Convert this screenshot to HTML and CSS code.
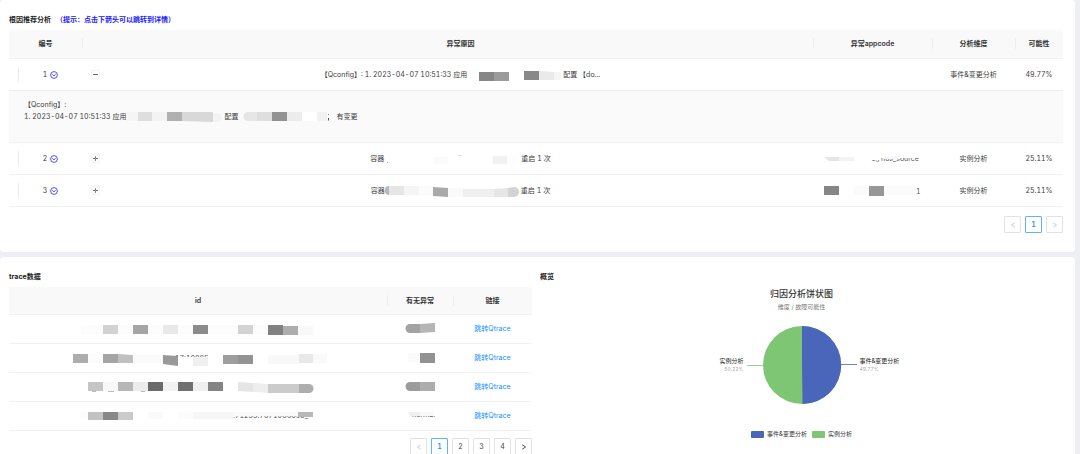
FILE: index.html
```html
<!DOCTYPE html>
<html lang="zh-CN">
<head>
    <meta charset="UTF-8">
    <meta name="viewport" content="width=device-width, initial-scale=1.0">
    <title>根因推荐分析</title>
    <link rel="stylesheet" href="styles.css">
</head>
<body>
    <svg class="sprite" aria-hidden="true">
        <symbol id="down" viewBox="0 0 16 16">
            <circle cx="8" cy="8" r="6.8" fill="none" stroke="currentColor" stroke-width="1.7"/>
            <path d="M4.6 6.6 L8 9.8 L11.4 6.6" fill="none" stroke="currentColor" stroke-width="1.7"/>
        </symbol>
        <symbol id="prev" viewBox="0 0 6 6"><path d="M4.8 .8 L1.4 3 L4.8 5.2" fill="none" stroke="currentColor" stroke-width=".9"/></symbol>
        <symbol id="next" viewBox="0 0 6 6"><path d="M1.2 .8 L4.6 3 L1.2 5.2" fill="none" stroke="currentColor" stroke-width=".9"/></symbol>
    </svg>

    <section class="card">
        <h2 class="title">根因推荐分析 <span class="tip">（提示：点击下箭头可以跳转到详情）</span></h2>
        <table class="table">
            <colgroup>
                <col class="col-no"><col class="col-expand"><col><col class="col-app"><col class="col-dim"><col class="col-rate">
            </colgroup>
            <thead>
                <tr>
                    <th>编号</th>
                    <th class="split"></th>
                    <th>异常原因</th>
                    <th class="split">异常appcode</th>
                    <th class="split">分析维度</th>
                    <th class="split">可能性</th>
                </tr>
            </thead>
            <tbody>
                <tr>
                    <td><div class="no">1 <a href="#d1" aria-label="详情 1"><svg class="down"><use href="#down"/></svg></a></div></td>
                    <td><button class="expand open" aria-label="收起"></button></td>
                    <td>
                        <div class="line">
                            <span>【Qconfig】: 1. 2023-04-07 10:51:33 应用</span>
                            <svg class="blur" width="96" height="16" viewBox="0 0 96 16">
                                <rect x="0" y="4" width="12" height="8" fill="#fdfdfd"/>
                                <rect x="12" y="5" width="15" height="9" fill="#868686"/>
                                <rect x="27" y="5" width="15" height="9" fill="#9b9b9b"/>
                                <rect x="57" y="4" width="15" height="9" fill="#888"/>
                                <path d="M72 4 L87 5 V13 L72 13z" fill="#eaeaea"/>
                                <path d="M87 5 H91 a4 4 0 0 1 0 8 H87z" fill="#f6f6f6"/>
                            </svg>
                            <span>配置 【do...</span>
                        </div>
                    </td>
                    <td></td>
                    <td>事件&amp;变更分析</td>
                    <td>49.77%</td>
                </tr>
                <tr class="detail" id="d1">
                    <td colspan="6">
                        <div class="line">【Qconfig】:</div>
                        <div class="line">
                            <span>1. 2023-04-07 10:51:33 应用</span>
                            <svg class="blur" width="98" height="12" viewBox="0 0 98 12">
                                <rect x="0" y="1" width="12" height="9" fill="#f5f5f5"/>
                                <rect x="12" y="1" width="14" height="9" fill="#dedede"/>
                                <rect x="26" y="1" width="15" height="9" fill="#f3f3f3"/>
                                <rect x="41" y="1" width="15" height="9" fill="#b0b0b0"/>
                                <path d="M56 1 H87 V11 L56 10z" fill="#d8d8d8"/>
                                <path d="M87 2 H91 a4 4 0 0 1 0 9 H87z" fill="#f3f3f3"/>
                            </svg>
                            <span>配置</span>
                            <svg class="blur" width="98" height="12" viewBox="0 0 98 12">
                                <path d="M20 1 H10 a4 4 0 0 0 0 9 H20z" fill="#e6e6e6"/>
                                <rect x="19" y="1" width="15" height="9" fill="#dedede"/>
                                <rect x="34" y="1" width="15" height="9" fill="#929292"/>
                                <rect x="49" y="1" width="15" height="9" fill="#ececec"/>
                                <rect x="64" y="1" width="15" height="9" fill="#fff"/>
                                <rect x="79" y="1" width="10" height="9" fill="#f2f2f2"/>
                                <rect x="90" y="3" width="1" height="1" fill="#888"/>
                                <path d="M90 7 h1 v2 l-1 1z" fill="#555"/>
                            </svg>
                            <span>有变更</span>
                        </div>
                    </td>
                </tr>
                <tr>
                    <td><div class="no">2 <a href="#d2" aria-label="详情 2"><svg class="down"><use href="#down"/></svg></a></div></td>
                    <td><button class="expand" aria-label="展开"></button></td>
                    <td>
                        <div class="line">
                            <span>容器</span>
                            <svg class="blur" width="137" height="16" viewBox="0 0 137 16">
                                <rect x="3" y="11" width="1" height="1" fill="#aaa"/>
                                <rect x="49" y="6" width="15" height="7" fill="#fbfbfb"/>
                                <rect x="74" y="4" width="3" height="1" fill="#ddd"/>
                                <rect x="109" y="5" width="14" height="8" fill="#f1f1f1"/>
                                <rect x="123" y="5" width="10" height="7" fill="#fdfdfd"/>
                            </svg>
                            <span>重启 1 次</span>
                        </div>
                    </td>
                    <td>
                        <svg class="blur" width="98" height="16" viewBox="0 0 98 16">
                            <text x="4" y="9">r_s</text>
                            <text x="24" y="9">_</text>
                            <text x="48" y="9">_g</text>
                            <text x="57" y="10">hos_source</text>
                            <rect x="0" y="0" width="56" height="9" fill="#fff"/>
                            <rect x="56" y="0" width="42" height="7" fill="#fff"/>
                            <path d="M0 6 H15 V10 H5z" fill="#e6e6e6"/>
                            <path d="M15 6 H30 V10 H15z" fill="#f3f3f3"/>
                            <path d="M60 5 H75 V8 H60z" fill="#f6f6f6"/>
                        </svg>
                    </td>
                    <td>实例分析</td>
                    <td>25.11%</td>
                </tr>
                <tr>
                    <td><div class="no">3 <a href="#d3" aria-label="详情 3"><svg class="down"><use href="#down"/></svg></a></div></td>
                    <td><button class="expand" aria-label="展开"></button></td>
                    <td>
                        <div class="line">
                            <span>容器</span>
                            <svg class="blur" width="136" height="16" viewBox="0 0 136 16">
                                <path d="M4 3 a4.500 4.500 0 0 0 0 9z" fill="#b8b8b8"/>
                                <rect x="4" y="3" width="15" height="9" fill="#e6e6e6"/>
                                <rect x="19" y="3" width="15" height="9" fill="#f5f5f5"/>
                                <rect x="34" y="3" width="15" height="9" fill="#fbfbfb"/>
                                <path d="M48 4 L63 5 V14 L48 13z" fill="#a9a9a9"/>
                                <rect x="63" y="5" width="15" height="9" fill="#fafafa"/>
                                <rect x="78" y="6" width="31" height="8" fill="#efefef"/>
                                <path d="M109 6 L123 5 V14 L109 14z" fill="#e6e6e6"/>
                                <path d="M123 5 L129 4 a5 5 0 0 1 0 10 H123z" fill="#d3d3d3"/>
                            </svg>
                            <span>重启 1 次</span>
                        </div>
                    </td>
                    <td>
                        <svg class="blur" width="98" height="16" viewBox="0 0 98 16">
                            <rect x="0" y="3" width="15" height="9" fill="#868686"/>
                            <rect x="30" y="3" width="15" height="9" fill="#fafafa"/>
                            <rect x="45" y="3" width="15" height="10" fill="#979797"/>
                            <rect x="60" y="3" width="31" height="9" fill="#fafafa"/>
                            <text x="92" y="11">1</text>
                        </svg>
                    </td>
                    <td>实例分析</td>
                    <td>25.11%</td>
                </tr>
            </tbody>
        </table>
        <nav class="pager" aria-label="根因分页">
            <button disabled aria-label="上一页"><svg><use href="#prev"/></svg></button>
            <button class="active">1</button>
            <button disabled aria-label="下一页"><svg><use href="#next"/></svg></button>
        </nav>
    </section>

    <section class="card bottom">
        <div class="trace">
            <h2 class="title">trace数据</h2>
            <table class="table trace-table">
                <colgroup>
                    <col><col class="col-flag"><col class="col-link">
                </colgroup>
                <thead>
                    <tr>
                        <th>id</th>
                        <th class="split">有无异常</th>
                        <th class="split">链接</th>
                    </tr>
                </thead>
                <tbody>
                    <tr>
                        <td>
                            <svg class="blur" width="258" height="18" viewBox="0 0 258 18">
                                <rect x="12" y="5" width="232" height="9" fill="#fcfcfc"/>
                                <rect x="34" y="5" width="15" height="9" fill="#d2d2d2"/>
                                <rect x="64" y="5" width="15" height="9" fill="#a5a5a5"/>
                                <rect x="94" y="5" width="15" height="9" fill="#e8e8e8"/>
                                <rect x="124" y="5" width="15" height="9" fill="#8b8b8b"/>
                                <rect x="169" y="5" width="15" height="9" fill="#d3d3d3"/>
                                <rect x="199" y="5" width="15" height="10" fill="#818181"/>
                                <rect x="214" y="6" width="15" height="9" fill="#adadad"/>
                                <rect x="229" y="6" width="15" height="9" fill="#f8f8f8"/>
                            </svg>
                        </td>
                        <td>
                            <svg class="blur" width="32" height="18" viewBox="0 0 32 18">
                                <path d="M16 4 H6 a4.500 4.500 0 0 0 0 9 H16z" fill="#a2a2a2"/>
                                <path d="M16 4 L31 3 V12 L16 13z" fill="#b5b5b5"/>
                            </svg>
                        </td>
                        <td><a class="link" href="#t1">跳转Qtrace</a></td>
                    </tr>
                    <tr>
                        <td>
                            <svg class="blur" width="258" height="18" viewBox="0 0 258 18">
                                <text x="106" y="12">17:10085</text>
                                <rect x="104" y="8" width="40" height="7" fill="#fff"/>
                                <rect x="4" y="5" width="15" height="9" fill="#adadad"/>
                                <rect x="19" y="5" width="15" height="9" fill="#fcfcfc"/>
                                <rect x="34" y="5" width="15" height="9" fill="#a5a5a5"/>
                                <path d="M49 5 L64 6 V14 H49z" fill="#c0c0c0"/>
                                <rect x="64" y="6" width="30" height="8" fill="#fafafa"/>
                                <path d="M94 6 L109 7 V17 L94 15z" fill="#999"/>
                                <rect x="124" y="8" width="15" height="9" fill="#f0f0f0"/>
                                <rect x="154" y="6" width="15" height="9" fill="#9e9e9e"/>
                                <rect x="169" y="6" width="15" height="9" fill="#939393"/>
                                <rect x="199" y="6" width="31" height="9" fill="#f8f8f8"/>
                                <rect x="230" y="5" width="14" height="9" fill="#e8e8e8"/>
                                <rect x="244" y="5" width="14" height="9" fill="#fafafa"/>
                            </svg>
                        </td>
                        <td>
                            <svg class="blur" width="32" height="18" viewBox="0 0 32 18">
                                <rect x="4" y="4" width="12" height="9" fill="#fbfbfb"/>
                                <rect x="16" y="4" width="15" height="10" fill="#929292"/>
                            </svg>
                        </td>
                        <td><a class="link" href="#t2">跳转Qtrace</a></td>
                    </tr>
                    <tr>
                        <td>
                            <svg class="blur" width="258" height="18" viewBox="0 0 258 18">
                                <rect x="23" y="13" width="4" height="1" fill="#bbb"/>
                                <rect x="39" y="13" width="6" height="1" fill="#bbb"/>
                                <rect x="72" y="13" width="4" height="1" fill="#bbb"/>
                                <rect x="19" y="4" width="15" height="9" fill="#c5c5c5"/>
                                <rect x="34" y="4" width="15" height="9" fill="#f8f8f8"/>
                                <rect x="49" y="4" width="15" height="9" fill="#b7b7b7"/>
                                <rect x="64" y="4" width="15" height="9" fill="#ececec"/>
                                <rect x="79" y="4" width="15" height="9" fill="#6a6a6a"/>
                                <rect x="94" y="4" width="15" height="9" fill="#f2f2f2"/>
                                <rect x="109" y="4" width="15" height="9" fill="#707070"/>
                                <rect x="124" y="4" width="15" height="9" fill="#f0f0f0"/>
                                <rect x="139" y="4" width="15" height="9" fill="#848484"/>
                                <path d="M169 4 L184 5 V14 L169 13z" fill="#e5e5e5"/>
                                <path d="M184 5 L199 6 V15 L184 14z" fill="#eee"/>
                                <rect x="199" y="6" width="31" height="9" fill="#cbcbcb"/>
                                <path d="M230 6 H240 a4.500 4.500 0 0 1 0 9 H230z" fill="#aeaeae"/>
                            </svg>
                        </td>
                        <td>
                            <svg class="blur" width="32" height="18" viewBox="0 0 32 18">
                                <path d="M16 4 H6 a4.500 4.500 0 0 0 0 9 H16z" fill="#9c9c9c"/>
                                <rect x="16" y="4" width="15" height="9" fill="#adadad"/>
                            </svg>
                        </td>
                        <td><a class="link" href="#t3">跳转Qtrace</a></td>
                    </tr>
                    <tr>
                        <td>
                            <svg class="blur" width="258" height="18" viewBox="0 0 258 18">
                                <text x="164" y="11">.71233.7871086893_</text>
                                <path d="M150 3 H244 V6 L200 9 H150z" fill="#fff"/>
                                <rect x="12" y="5" width="7" height="7" fill="#fcfcfc"/>
                                <rect x="19" y="5" width="15" height="8" fill="#c2c2c2"/>
                                <rect x="34" y="5" width="15" height="8" fill="#888"/>
                                <rect x="49" y="5" width="15" height="8" fill="#cacaca"/>
                                <rect x="79" y="5" width="15" height="7" fill="#fafafa"/>
                                <rect x="109" y="5" width="15" height="7" fill="#fcfcfc"/>
                                <rect x="124" y="5" width="40" height="7" fill="#f6f6f6"/>
                                <path d="M164 5 H230 V9 H164z" fill="#fafafa"/>
                                <rect x="229" y="5" width="15" height="5" fill="#b8b8b8"/>
                            </svg>
                        </td>
                        <td>
                            <svg class="blur" width="32" height="18" viewBox="0 0 32 18">
                                <text x="8" y="10">normal</text>
                                <rect x="4" y="3" width="28" height="6" fill="#fff"/>
                                <path d="M4 5 H16 V9 H6z" fill="#f0f0f0"/>
                                <rect x="16" y="5" width="14" height="4" fill="#f9f9f9"/>
                            </svg>
                        </td>
                        <td><a class="link" href="#t4">跳转Qtrace</a></td>
                    </tr>
                </tbody>
            </table>
            <nav class="pager" aria-label="trace分页">
                <button disabled aria-label="上一页"><svg><use href="#prev"/></svg></button>
                <button class="active">1</button>
                <button>2</button>
                <button>3</button>
                <button>4</button>
                <button aria-label="下一页"><svg><use href="#next"/></svg></button>
            </nav>
        </div>

        <div class="overview">
            <h2 class="title">概览</h2>
            <div class="chart">
                <h3>归因分析饼状图</h3>
                <p class="sub">维度 / 故障可能性</p>
                <div class="pie-row">
                    <div class="label left">实例分析<small>50.22%</small></div>
                    <svg width="110" height="78" viewBox="0 0 110 78">
                        <path d="M0 39.500 H17" stroke="#7fc674" stroke-width=".8"/>
                        <path d="M94 38.500 H110" stroke="#4a66bb" stroke-width=".8"/>
                        <circle cx="55" cy="39" r="39" fill="#7fc674"/>
                        <path d="M55 0 A39 39 0 0 1 55.500 78 L55 39z" fill="#4a66bb"/>
                    </svg>
                    <div class="label">事件&amp;变更分析<small>49.77%</small></div>
                </div>
                <div class="legend">
                    <span class="swatch blue"></span>事件&amp;变更分析
                    <span class="swatch green"></span>实例分析
                </div>
            </div>
        </div>
    </section>
</body>
</html>
```
FILE: styles.css
```css
* { box-sizing: border-box; }
html { height: 100%; overflow: hidden; }
body { margin: 0; background: #eeeff4; color: #3c3c3c; font: 7px/12px Inter, "Noto Sans CJK SC", sans-serif; font-variant-numeric: tabular-nums; }
a { color: #1890ff; text-decoration: none; }
.sprite { display: none; }

.card { margin: 0 5px 5px 0; padding: 14px 12px 19px 9px; background: #fff; border-radius: 4px; }
.title { margin: 0 0 5px; font-size: 7px; line-height: 11px; font-weight: 700; color: #222; }
.tip { margin-left: 3px; color: #2020ff; }

/* 表格 */
.table { width: 100%; table-layout: fixed; border-collapse: separate; border-spacing: 0; text-align: center; }
.table th { position: relative; height: 29px; padding: 0; background: #f9f9f9; border-bottom: 1px solid #f1f1f1; font-weight: 600; color: #333; }
.table td { height: 32px; padding: 0; border-bottom: 1px solid #f1f1f1; }
.trace-table th { height: 28px; }
.trace-table td { height: 29px; }
.split::before { content: ""; position: absolute; left: 0; top: 8px; height: 11px; border-left: 1px solid #eee; }
.col-no { width: 73px; }
.col-expand { width: 26px; }
.col-app { width: 119px; }
.col-dim { width: 83px; }
.col-rate { width: 48px; }
.col-flag { width: 66px; }
.col-link { width: 79px; }

.no { display: flex; align-items: center; justify-content: center; gap: 3px; height: 15px; margin-left: 9px; border-left: 1px solid #ececec; }
.no a { display: flex; color: #3030ff; }
.down { width: 8px; height: 8px; }
.expand { display: block; position: relative; width: 9px; height: 9px; margin: 0 auto; padding: 0; border: 1px solid #f3f3f3; border-radius: 1px; background: #fff; cursor: pointer; }
.expand::before { content: ""; position: absolute; left: 1px; right: 1px; top: 3px; height: 1px; background: #666; }
.expand::after { content: ""; position: absolute; top: 1px; bottom: 1px; left: 3px; width: 1px; background: #888; }
.expand.open::after { display: none; }

.line { display: flex; align-items: center; justify-content: center; white-space: nowrap; }
.blur { display: block; flex: none; margin: 0 auto; fill: #555; }
.line .blur { margin: 0; }
.table .detail td { height: 52px; padding: 8px 15px 19px; background: #fafafa; }
.detail .line { justify-content: flex-start; }

/* 分页 */
.pager { display: flex; justify-content: flex-end; gap: 4px; margin-top: 9px; }
.trace .pager { margin-top: 7px; }
.pager button { display: flex; align-items: center; justify-content: center; width: 17px; height: 17px; padding: 0; border: 1px solid #e2e2e2; border-radius: 1px; background: #fff; font: inherit; color: #444; cursor: pointer; }
.pager button:disabled { color: #c4c4c4; }
.pager .active { border-color: #5fb2ff; color: #1890ff; font-weight: 600; }
.pager svg { width: 6px; height: 6px; }

.bottom { display: flex; gap: 8px; margin-bottom: 0; }
.trace, .overview { flex: 1; min-width: 0; }

/* 图表 */
.chart { display: flex; flex-direction: column; align-items: center; }
.chart h3 { margin: 0; font-size: 9px; line-height: 14px; font-weight: 500; color: #333; }
.chart .sub { margin: 2px 0 15px; font-size: 6px; line-height: 8px; color: #777; }
.pie-row { display: grid; grid-template-columns: 1fr 110px 1fr; align-items: center; column-gap: 3px; width: 100%; }
.label { font-size: 6px; line-height: 8px; color: #222; }
.label small { display: block; font-size: 5px; color: #aaa; }
.left { text-align: right; }
.legend { display: flex; align-items: center; gap: 3px; margin-top: 26px; font-size: 6px; line-height: 8px; color: #333; }
.swatch { width: 13px; height: 7px; border-radius: 1px; }
.blue { background: #4a66bb; }
.green { margin-left: 2px; background: #7fc674; }
```
